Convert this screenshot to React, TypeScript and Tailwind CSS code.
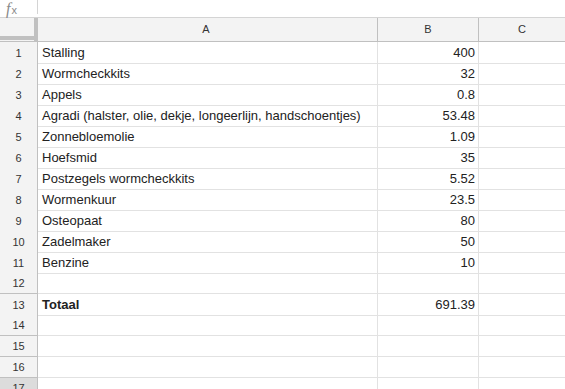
const rows: [string, string][] = [
  ['Stalling', '400'],
  ['Wormcheckkits', '32'],
  ['Appels', '0.8'],
  ['Agradi (halster, olie, dekje, longeerlijn, handschoentjes)', '53.48'],
  ['Zonnebloemolie', '1.09'],
  ['Hoefsmid', '35'],
  ['Postzegels wormcheckkits', '5.52'],
  ['Wormenkuur', '23.5'],
  ['Osteopaat', '80'],
  ['Zadelmaker', '50'],
  ['Benzine', '10'],
  ['', ''],
  ['Totaal', '691.39'],
  ['', ''],
  ['', ''],
  ['', ''],
  ['', ''],
];

export default function App() {
  return (
    <div
      className="w-[565px] h-[389px] overflow-hidden bg-white text-[#222]"
      style={{ fontFamily: '"Liberation Sans", Arial, sans-serif' }}
    >
      {/* formula bar */}
      <div className="h-[18px] flex border-b border-[#d4d4d4]">
        <div className="w-[38px] h-[14px] flex items-start pl-[6px] pt-[1px] border-r border-[#d4d4d4] text-[#8a8a8a] leading-none">
          <span className="italic text-[16px]" style={{ fontFamily: '"Liberation Serif", serif' }}>f</span>
          <span className="text-[11px] mt-[4px] ml-[1px]">x</span>
        </div>
      </div>

      {/* column header */}
      <div className="grid grid-cols-[38px_340px_101px_1fr] h-[24px] bg-[#f3f3f3] border-b border-[#c0c0c0] text-[11px] text-[#333]">
        <div className="border-r-[4px] border-[#c0c0c0] relative">
          <div className="absolute left-0 right-0 bottom-[1px] h-[4px] bg-[#c0c0c0]" />
        </div>
        <div className="flex items-center justify-center border-r border-[#c0c0c0] -ml-[3px]">A</div>
        <div className="flex items-center justify-center border-r border-[#c0c0c0]">B</div>
        <div className="flex items-center justify-center">C</div>
      </div>

      {rows.map(([label, value], i) => {
        const bold = label === 'Totaal';
        return (
          <div key={i} className="grid grid-cols-[38px_340px_101px_1fr] h-[21px] text-[13px]">
            <div
              className={`flex items-center justify-center pt-[1px] border-r border-b border-[#c0c0c0] text-[11px] text-[#333] ${
                i === 16 ? 'bg-[#dcdcdc]' : 'bg-[#f3f3f3]'
              }`}
            >
              {i + 1}
            </div>
            <div className={`flex items-center pt-[1px] px-[4px] border-r border-b border-[#e2e2e2] ${bold ? 'font-bold' : ''}`}>
              {label}
            </div>
            <div className="flex items-center justify-end pt-[1px] px-[3px] border-r border-b border-[#e2e2e2]">{value}</div>
            <div className="border-b border-[#e2e2e2]" />
          </div>
        );
      })}
    </div>
  );
}
